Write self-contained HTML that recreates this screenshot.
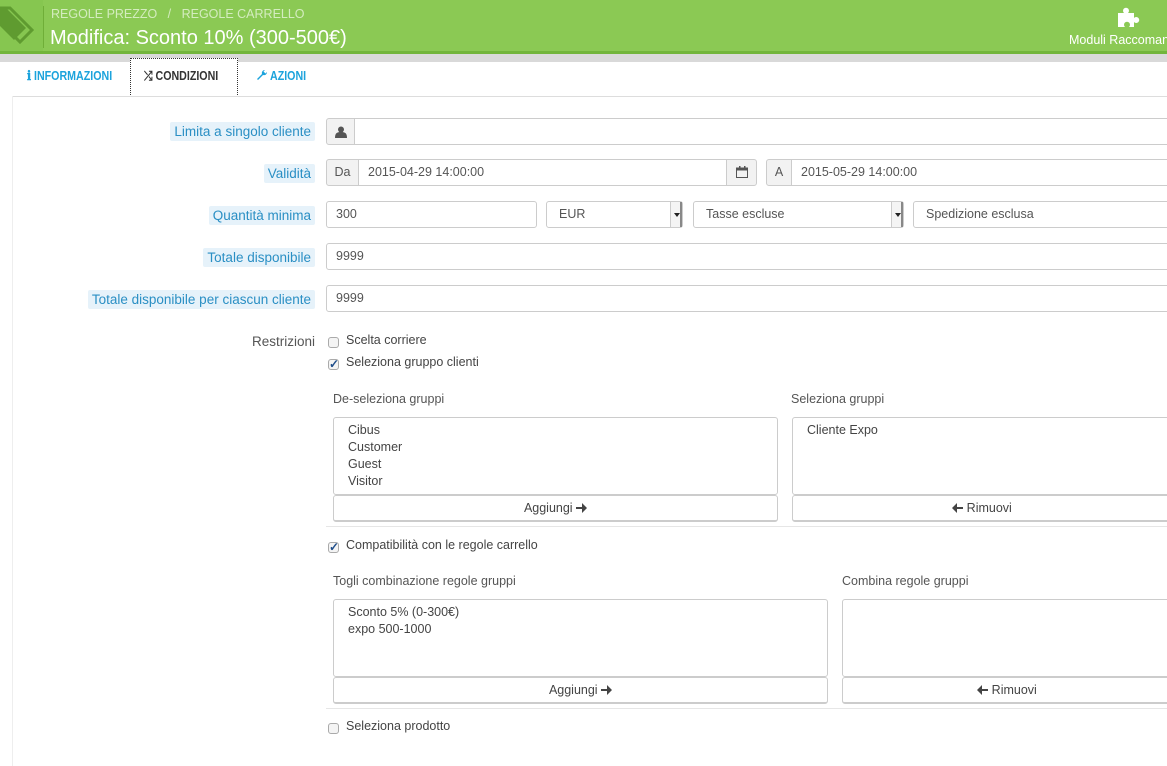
<!DOCTYPE html>
<html><head><meta charset="utf-8"><style>
*{box-sizing:border-box;margin:0;padding:0}
body{width:1167px;height:762px;overflow:hidden;background:#fff;font-family:"Liberation Sans",sans-serif;font-size:12.5px;color:#555;position:relative}
.a{position:absolute}
.hdr{left:0;top:0;width:1167px;height:51px;background:#8bc954}
.hl{left:0;top:51px;width:1167px;height:3px;background:#72b53b}
.gs{left:0;top:54px;width:1167px;height:8px;background:#d9d9d9}
.lbl{background:#e6f2fa;color:#2a8fc4;font-size:13.5px;padding:1px 4px;height:19px;line-height:17px;border-radius:2px}
.inp{border:1px solid #ccc;border-radius:3px;background:#fff;height:27px;line-height:25px;padding-left:9px;color:#555;font-size:12.5px}
.add{background:#f2f2f2;border:1px solid #ccc;height:27px;line-height:25px;text-align:center;color:#555;font-size:12.5px}
.sel{border:1px solid #ccc;border-radius:3px;height:27px;line-height:25px;padding-left:12px}
.arr{position:absolute;right:0;top:0;width:12px;height:25px;border-left:1px solid #ccc;background:#f4f4f4;box-shadow:inset -2px 0 0 #888}
.arr:after{content:"";position:absolute;left:3px;top:11px;border:3px solid transparent;border-top:4px solid #222}
.cb{width:11px;height:11px;border:1px solid #aaa;border-radius:3px;background:#f4f4f4}
.box{border:1px solid #ccc;border-radius:3px;padding:4px 14px;line-height:17px;color:#444}
.btn{border:1px solid #ccc;border-bottom:2px solid #ccc;border-radius:3px;text-align:center;line-height:24px;color:#444;height:27px}
.btn svg{vertical-align:-1px}
.hr{height:1px;background:#e6e6e6}
.tab{font-size:13px;font-weight:bold;transform:scaleX(.82);transform-origin:left;white-space:nowrap}
</style></head><body>
<div class="a hdr"></div><div class="a hl"></div><div class="a gs"></div>
<div class="a" style="left:0;top:0;width:43px;height:51px;background:#86c650"></div>
<svg class="a" style="left:0;top:0" width="43" height="51"><path d="M0 8h10l22 22-12 12L0 22z" fill="none" stroke="#5f9b30" stroke-width="3"/><path d="M0 8h6l20 20-12 12L0 26z" fill="#5f9b30"/></svg>
<div class="a" style="left:43px;top:6px;width:1px;height:42px;background:#6fae38"></div>
<div class="a" style="left:51px;top:7px;color:#d4ecbf;font-size:12.5px">REGOLE PREZZO &nbsp;&nbsp;/ &nbsp;&nbsp;REGOLE CARRELLO</div>
<div class="a" style="left:50px;top:27px;color:#fff;font-size:20px">Modifica: Sconto 10% (300-500€)</div>
<svg class="a" style="left:1116px;top:5px" width="28" height="24"><path d="M2 8h6a3 3 0 1 1 4 0h6v5a3 3 0 1 1 0 4v5h-5a3 3 0 1 0-4 0H2z" fill="#fff"/></svg>
<div class="a" style="left:1069px;top:33px;color:#fff;font-size:12.5px;white-space:nowrap">Moduli Raccomandati</div>
<div class="a tab" style="left:27px;top:68px;color:#1ca3dc">ℹ INFORMAZIONI</div>
<div class="a" style="left:130px;top:58px;width:108px;height:39px;border:1px dotted #333;border-bottom:none;background:#fff"></div>
<div class="a tab" style="left:144px;top:68px;color:#333">⤮ CONDIZIONI</div>
<svg class="a" style="left:256px;top:69px" width="12" height="12"><path d="M11 3a3 3 0 0 1-4 3L2 11 1 10l5-5a3 3 0 0 1 3-4L7.5 2.5 9.5 4.5z" fill="#1ca3dc"/></svg>
<div class="a tab" style="left:270px;top:68px;color:#1ca3dc">AZIONI</div>
<div class="a" style="left:12px;top:96px;width:1160px;height:1px;background:#ddd"></div>
<div class="a" style="left:12px;top:96px;width:1px;height:670px;background:#eee"></div>

<div class="a lbl" style="right:852px;top:122px">Limita a singolo cliente</div>
<div class="a add" style="left:326px;top:118px;width:29px;border-radius:3px 0 0 3px">
<svg width="12" height="12" style="margin-top:7px"><circle cx="6" cy="3.5" r="3" fill="#555"/><path d="M0 12c0-5 2-6 6-6s6 1 6 6z" fill="#555"/></svg></div>
<div class="a inp" style="left:354px;top:118px;width:820px;border-radius:0 3px 3px 0"></div>

<div class="a lbl" style="right:852px;top:164px">Validità</div>
<div class="a add" style="left:326px;top:159px;width:33px;border-radius:3px 0 0 3px">Da</div>
<div class="a inp" style="left:358px;top:159px;width:369px;border-radius:0">2015-04-29 14:00:00</div>
<div class="a add" style="left:726px;top:159px;width:31px;border-radius:0 3px 3px 0"><svg width="12" height="12" style="margin-top:6px"><rect x="0.5" y="2" width="11" height="9.5" fill="none" stroke="#555"/><rect x="0.5" y="2" width="11" height="2.5" fill="#555"/><rect x="3" y="0" width="1.5" height="3" fill="#555"/><rect x="8" y="0" width="1.5" height="3" fill="#555"/></svg></div>
<div class="a add" style="left:766px;top:159px;width:26px;border-radius:3px 0 0 3px">A</div>
<div class="a inp" style="left:791px;top:159px;width:380px;border-radius:0 3px 3px 0">2015-05-29 14:00:00</div>

<div class="a lbl" style="right:852px;top:206px">Quantità minima</div>
<div class="a inp" style="left:326px;top:201px;width:211px">300</div>
<div class="a sel" style="left:546px;top:201px;width:137px">EUR<span class="arr"></span></div>
<div class="a sel" style="left:693px;top:201px;width:211px">Tasse escluse<span class="arr"></span></div>
<div class="a sel" style="left:913px;top:201px;width:260px">Spedizione esclusa</div>

<div class="a lbl" style="right:852px;top:248px">Totale disponibile</div>
<div class="a inp" style="left:326px;top:243px;width:848px">9999</div>
<div class="a lbl" style="right:852px;top:290px">Totale disponibile per ciascun cliente</div>
<div class="a inp" style="left:326px;top:285px;width:848px">9999</div>

<div class="a" style="right:852px;top:334px;font-size:13.5px;color:#555">Restrizioni</div>
<div class="a cb" style="left:328px;top:337px"></div>
<div class="a" style="left:346px;top:333px;color:#444">Scelta corriere</div>
<div class="a cb" style="left:328px;top:359px;color:#1f4e8a;font-size:12px;line-height:8px;font-weight:bold">✓</div>
<div class="a" style="left:346px;top:355px;color:#444">Seleziona gruppo clienti</div>

<div class="a" style="left:333px;top:392px;color:#555">De-seleziona gruppi</div>
<div class="a" style="left:791px;top:392px;color:#555">Seleziona gruppi</div>
<div class="a box" style="left:333px;top:417px;width:445px;height:78px">Cibus<br>Customer<br>Guest<br>Visitor</div>
<div class="a box" style="left:792px;top:417px;width:380px;height:78px">Cliente Expo</div>
<div class="a btn" style="left:333px;top:495px;width:445px">Aggiungi <svg width="11" height="10"><path d="M0 4h6V0l5 5-5 5V6H0z" fill="#444"/></svg></div>
<div class="a btn" style="left:792px;top:495px;width:380px"><svg width="11" height="10"><path d="M11 4H5V0L0 5l5 5V6h6z" fill="#444"/></svg> Rimuovi</div>
<div class="a hr" style="left:326px;top:526px;width:841px"></div>

<div class="a cb" style="left:328px;top:542px;color:#1f4e8a;font-size:12px;line-height:8px;font-weight:bold">✓</div>
<div class="a" style="left:346px;top:538px;color:#444">Compatibilità con le regole carrello</div>
<div class="a" style="left:333px;top:574px;color:#555">Togli combinazione regole gruppi</div>
<div class="a" style="left:842px;top:574px;color:#555">Combina regole gruppi</div>
<div class="a box" style="left:333px;top:599px;width:495px;height:78px">Sconto 5% (0-300€)<br>expo 500-1000</div>
<div class="a box" style="left:842px;top:599px;width:330px;height:78px"></div>
<div class="a btn" style="left:333px;top:677px;width:495px">Aggiungi <svg width="11" height="10"><path d="M0 4h6V0l5 5-5 5V6H0z" fill="#444"/></svg></div>
<div class="a btn" style="left:842px;top:677px;width:330px"><svg width="11" height="10"><path d="M11 4H5V0L0 5l5 5V6h6z" fill="#444"/></svg> Rimuovi</div>
<div class="a hr" style="left:326px;top:708px;width:841px"></div>
<div class="a cb" style="left:328px;top:723px"></div>
<div class="a" style="left:346px;top:719px;color:#444">Seleziona prodotto</div>
</body></html>
